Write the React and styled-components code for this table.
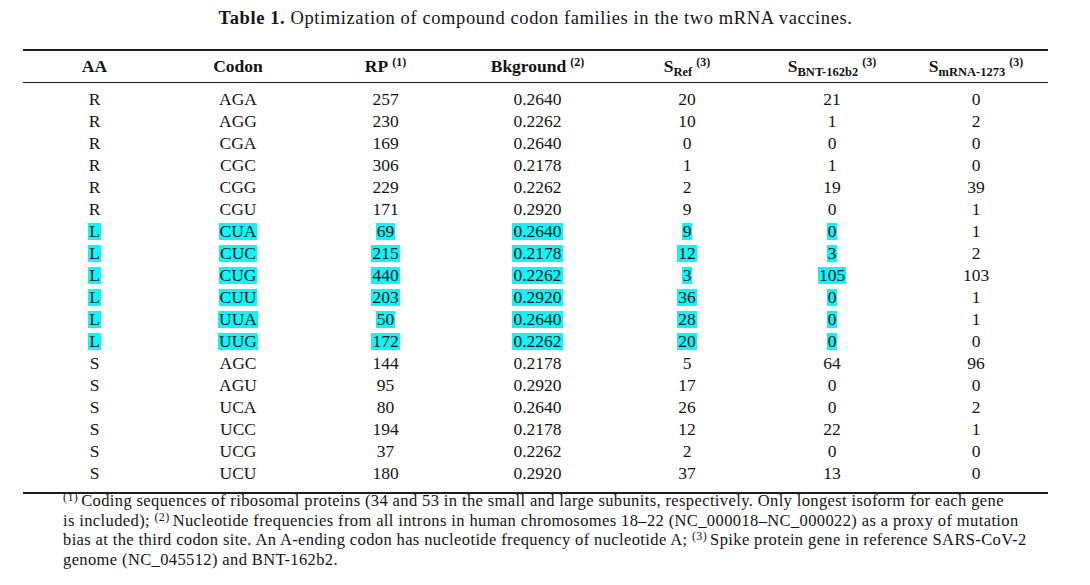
import React from 'react';
import styled, { createGlobalStyle } from 'styled-components';

const Global = createGlobalStyle`
  html, body { margin: 0; padding: 0; background: #ffffff; }
  body { font-family: "Liberation Serif", "Times New Roman", serif; color: #141414; }
`;

const Page = styled.div`
  width: 1090px;
  height: 585px;
  box-sizing: border-box;
  padding: 8px 42px 0 23px;
  overflow: hidden;
`;

const Caption = styled.div`
  text-align: center;
  font-size: 18.5px;
  line-height: 20px;
  height: 41px;
  letter-spacing: 0.6px;
`;

const Bold = styled.b`
  font-weight: 700;
`;

const Table = styled.table`
  width: 1025px;
  border-collapse: collapse;
  table-layout: fixed;
  border-top: 2px solid #1e1e1e;
  border-bottom: 2px solid #1e1e1e;
`;

const Col = styled.col`
  width: ${p => p.$w}px;
`;

const Th = styled.th`
  height: 31px;
  padding: 0;
  font-size: 17.5px;
  font-weight: 700;
  text-align: center;
  border-bottom: 1px solid #1e1e1e;
  white-space: nowrap;
  vertical-align: middle;
`;

const Sub = styled.sub`
  font-size: 12.5px;
  vertical-align: -4px;
  line-height: 0;
`;

const Sup = styled.sup`
  font-size: 12px;
  vertical-align: 6px;
  line-height: 0;
  margin-left: 4px;
`;

const Row = styled.tr`
  &:first-child td { padding-top: 5px; }
  &:last-child td { padding-bottom: 8px; }
`;

const Td = styled.td`
  height: 22px;
  padding: 0;
  font-size: 17.5px;
  line-height: 22px;
  text-align: center;
  white-space: nowrap;
`;

const Mark = styled.span`
  background: ${p => (p.$on ? '#0ff5f8' : 'transparent')};
  display: inline-block;
  line-height: 17px;
  padding: 0 1px;
`;

const Notes = styled.div`
  margin-top: -3px;
  padding: 0 0 0 40px;
  font-size: 16.5px;
  line-height: 19.5px;
  letter-spacing: 0.38px;
`;

const NoteLine = styled.div`
  white-space: nowrap;
`;

const NoteSup = styled.sup`
  font-size: 12px;
  vertical-align: 5px;
  line-height: 0;
  margin-right: 3px;
`;

const widths = [143, 144, 151, 153, 146, 144, 144];

const rows = [
  ['R', 'AGA', '257', '0.2640', '20', '21', '0'],
  ['R', 'AGG', '230', '0.2262', '10', '1', '2'],
  ['R', 'CGA', '169', '0.2640', '0', '0', '0'],
  ['R', 'CGC', '306', '0.2178', '1', '1', '0'],
  ['R', 'CGG', '229', '0.2262', '2', '19', '39'],
  ['R', 'CGU', '171', '0.2920', '9', '0', '1'],
  ['L', 'CUA', '69', '0.2640', '9', '0', '1'],
  ['L', 'CUC', '215', '0.2178', '12', '3', '2'],
  ['L', 'CUG', '440', '0.2262', '3', '105', '103'],
  ['L', 'CUU', '203', '0.2920', '36', '0', '1'],
  ['L', 'UUA', '50', '0.2640', '28', '0', '1'],
  ['L', 'UUG', '172', '0.2262', '20', '0', '0'],
  ['S', 'AGC', '144', '0.2178', '5', '64', '96'],
  ['S', 'AGU', '95', '0.2920', '17', '0', '0'],
  ['S', 'UCA', '80', '0.2640', '26', '0', '2'],
  ['S', 'UCC', '194', '0.2178', '12', '22', '1'],
  ['S', 'UCG', '37', '0.2262', '2', '0', '0'],
  ['S', 'UCU', '180', '0.2920', '37', '13', '0'],
];

export default function App() {
  return (
    <Page>
      <Global />
      <Caption>
        <Bold>Table 1.</Bold> Optimization of compound codon families in the two mRNA vaccines.
      </Caption>
      <Table>
        <colgroup>
          {widths.map((w, i) => <Col key={i} $w={w} />)}
        </colgroup>
        <thead>
          <tr>
            <Th>AA</Th>
            <Th>Codon</Th>
            <Th>RP<Sup>(1)</Sup></Th>
            <Th>Bkground<Sup>(2)</Sup></Th>
            <Th>S<Sub>Ref</Sub><Sup>(3)</Sup></Th>
            <Th>S<Sub>BNT-162b2</Sub><Sup>(3)</Sup></Th>
            <Th>S<Sub>mRNA-1273</Sub><Sup>(3)</Sup></Th>
          </tr>
        </thead>
        <tbody>
          {rows.map((r, i) => {
            const hl = r[0] === 'L';
            return (
              <Row key={i}>
                {r.map((c, j) => (
                  <Td key={j}>
                    <Mark $on={hl && j < 6}>{c}</Mark>
                  </Td>
                ))}
              </Row>
            );
          })}
        </tbody>
      </Table>
      <Notes>
        <NoteLine>
          <NoteSup>(1)</NoteSup>Coding sequences of ribosomal proteins (34 and 53 in the small and large subunits, respectively. Only longest isoform for each gene
        </NoteLine>
        <NoteLine>
          is included); <NoteSup>(2)</NoteSup>Nucleotide frequencies from all introns in human chromosomes 18–22 (NC_000018–NC_000022) as a proxy of mutation
        </NoteLine>
        <NoteLine>
          bias at the third codon site. An A-ending codon has nucleotide frequency of nucleotide A; <NoteSup>(3)</NoteSup>Spike protein gene in reference SARS-CoV-2
        </NoteLine>
        <NoteLine>genome (NC_045512) and BNT-162b2.</NoteLine>
      </Notes>
    </Page>
  );
}
